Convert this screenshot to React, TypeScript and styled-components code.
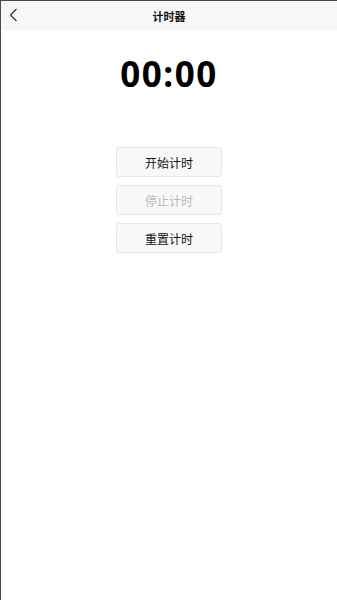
import React, { useState, useEffect, useRef } from 'react'
import styled, { createGlobalStyle } from 'styled-components'

const GlobalStyle = createGlobalStyle`
    html, body {
        margin: 0;
        padding: 0;
        background: #fff;
    }
    body {
        font-family: 'Liberation Sans', 'Noto Sans CJK SC', sans-serif;
    }
`

const Page = styled.div`
    box-sizing: border-box;
    width: 337px;
    height: 600px;
    border-top: 1px solid #4a4a4a;
    border-left: 1px solid #4a4a4a;
    background: #fff;
    display: flex;
    flex-direction: column;
`

const NavBar = styled.div`
    position: relative;
    height: 29px;
    background: #f7f7f7;
    display: flex;
    align-items: center;
    justify-content: center;
`

const BackButton = styled.button`
    position: absolute;
    left: 4px;
    top: 5px;
    width: 16px;
    height: 18px;
    padding: 0;
    border: none;
    background: transparent;
    display: flex;
    align-items: center;
    justify-content: center;
    cursor: pointer;
`

const Title = styled.h1`
    margin: 0;
    font-size: 11px;
    font-weight: bold;
    color: #111;
    font-family: 'Noto Sans CJK SC', sans-serif;
`

const Display = styled.div`
    margin-top: 22px;
    text-align: center;
    font-family: 'Noto Sans', 'Liberation Sans', sans-serif;
    font-size: 35px;
    font-weight: bold;
    line-height: 44px;
    color: #000;
    letter-spacing: 1.5px;
`

const Controls = styled.div`
    margin-top: 51px;
    display: flex;
    flex-direction: column;
    align-items: center;
    gap: 8px;
`

const ActionButton = styled.button<{ $disabled?: boolean }>`
    box-sizing: border-box;
    width: 106px;
    height: 30px;
    border: 1px solid #e6e6e6;
    border-radius: 3px;
    background: #f8f8f8;
    font-family: 'Noto Sans CJK SC', sans-serif;
    font-size: 12px;
    color: ${(p) => (p.$disabled ? '#b8b8b8' : '#111')};
    cursor: ${(p) => (p.$disabled ? 'default' : 'pointer')};
    padding: 0;
`

const pad = (n: number) => String(n).padStart(2, '0')

const App = () => {
    const [seconds, setSeconds] = useState(0)
    const [running, setRunning] = useState(false)
    const timer = useRef<number | null>(null)

    useEffect(() => {
        if (running) {
            timer.current = window.setInterval(() => setSeconds((s) => s + 1), 1000)
        }
        return () => {
            if (timer.current) window.clearInterval(timer.current)
        }
    }, [running])

    return (
        <>
            <GlobalStyle />
            <Page>
                <NavBar>
                    <BackButton aria-label="back">
                        <svg width="9" height="14" viewBox="0 0 9 14">
                            <path d="M7.5 1 L1.5 7 L7.5 13" fill="none" stroke="#333" strokeWidth="1.2" />
                        </svg>
                    </BackButton>
                    <Title>计时器</Title>
                </NavBar>
                <Display>
                    {pad(Math.floor(seconds / 60))}:{pad(seconds % 60)}
                </Display>
                <Controls>
                    <ActionButton $disabled={running} onClick={() => setRunning(true)}>
                        开始计时
                    </ActionButton>
                    <ActionButton $disabled={!running} onClick={() => setRunning(false)}>
                        停止计时
                    </ActionButton>
                    <ActionButton
                        onClick={() => {
                            setRunning(false)
                            setSeconds(0)
                        }}
                    >
                        重置计时
                    </ActionButton>
                </Controls>
            </Page>
        </>
    )
}

export default App
